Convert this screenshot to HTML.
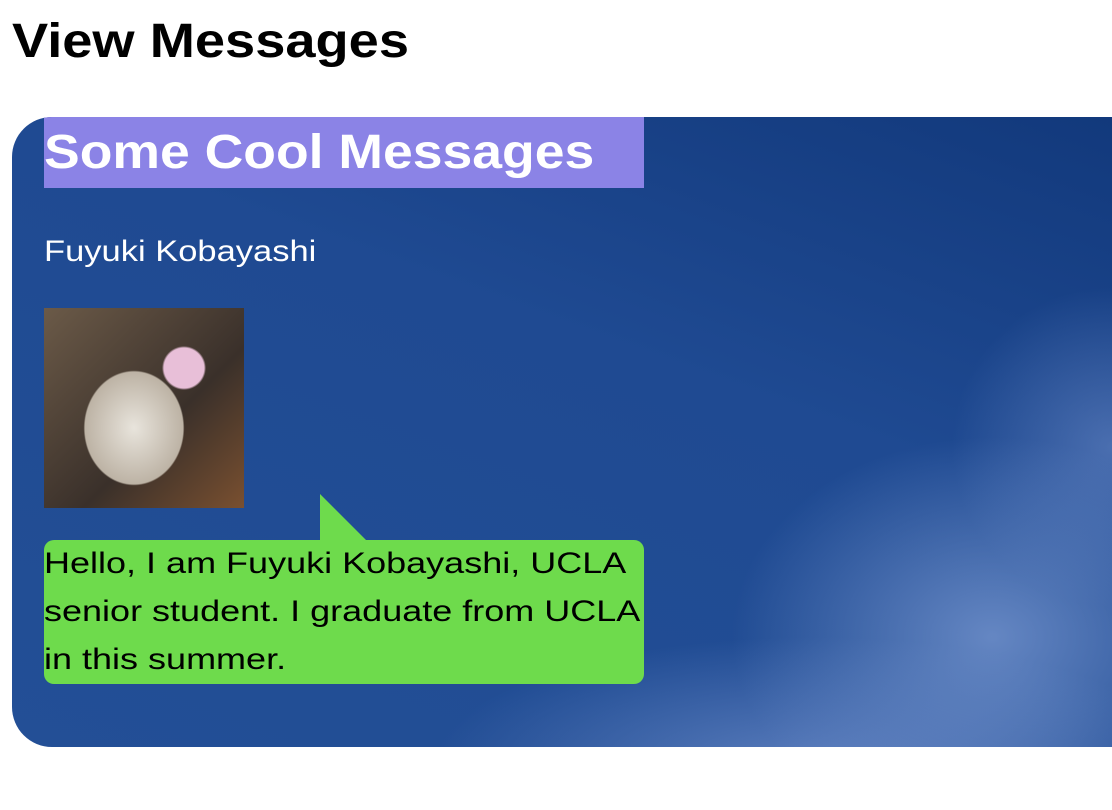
<!DOCTYPE html>
<html><head><meta charset="utf-8"><style>
body{margin:0;width:1112px;height:810px;background:#fff;font-family:"Liberation Sans","Noto Sans CJK JP",sans-serif;position:relative;overflow:hidden}
h1{position:absolute;left:12px;top:12px;margin:0;font-size:48px;font-weight:bold;line-height:60px;color:#000;transform:scaleX(1.13);transform-origin:0 0;white-space:nowrap}
.panel{position:absolute;left:12px;top:117px;width:1100px;height:630px;border-radius:40px 0 0 40px;overflow:hidden;
background:radial-gradient(ellipse 260px 200px at 980px 520px,rgba(130,160,215,.7),rgba(130,160,215,0)),
radial-gradient(ellipse 380px 130px at 800px 650px,rgba(120,150,210,.65),rgba(120,150,210,0)),
radial-gradient(ellipse 160px 160px at 1100px 330px,rgba(120,150,210,.5),rgba(120,150,210,0)),
linear-gradient(200deg,#12397c 0%,#1f4a92 40%,#234f96 100%)}
.title{position:absolute;left:32px;top:0;width:600px;height:71px;background:#8b83e6}
.title span{display:block;color:#fff;font-size:48px;font-weight:bold;line-height:71px;white-space:nowrap;transform:scaleX(1.115);transform-origin:0 0}
.name{position:absolute;left:32px;top:115px;color:#fff;font-size:30px;line-height:40px;transform:scaleX(1.15);transform-origin:0 0;white-space:nowrap}
.img{position:absolute;left:32px;top:191px;width:200px;height:200px;background:radial-gradient(ellipse 70px 80px at 90px 120px,#e8e4dc,#bdb3a5 70%,rgba(0,0,0,0) 72%),radial-gradient(circle at 140px 60px,#e8bfd8 20px,rgba(0,0,0,0) 22px),linear-gradient(135deg,#6b5a48,#3a302a 60%,#7a5030)}
.bubble{position:absolute;left:32px;top:423px;width:600px;height:144px;background:#6edb4c;border-radius:10px}
.bubble span{display:block;font-size:30px;line-height:48px;color:#000;white-space:nowrap;transform:scaleX(1.2);transform-origin:0 0}
.tri{position:absolute;left:308px;top:377px;width:0;height:0;border-top:46px solid transparent;border-left:46px solid #6edb4c}
</style></head><body>
<h1>View Messages</h1>
<div class="panel">
<div class="title"><span>Some Cool Messages</span></div>
<div class="name">Fuyuki Kobayashi</div>
<div class="img"></div>
<div class="tri"></div>
<div class="bubble"><span>Hello, I am Fuyuki Kobayashi, UCLA<br>senior student. I graduate from UCLA<br>in this summer.</span></div>
</div>
</body></html>
